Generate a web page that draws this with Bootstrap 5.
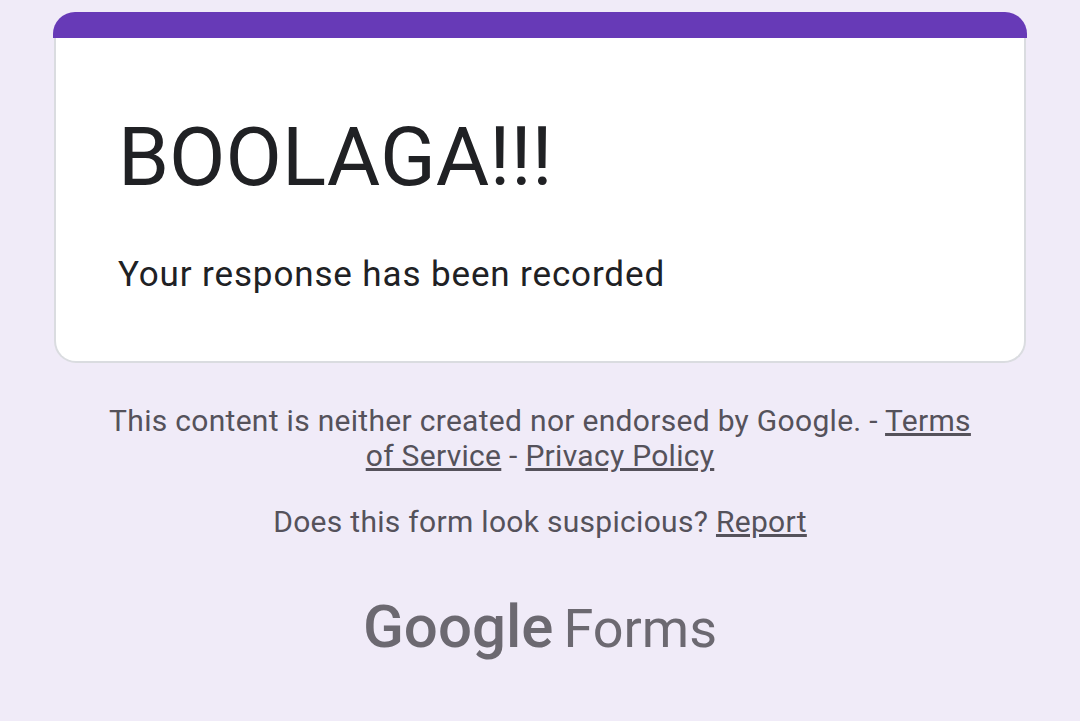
<!DOCTYPE html>
<html lang="en">
<head>
<meta charset="utf-8">
<meta name="viewport" content="width=device-width, initial-scale=1">
<title>BOOLAGA!!!</title>
<link href="https://cdn.jsdelivr.net/npm/bootstrap@5.3.0/dist/css/bootstrap.min.css" rel="stylesheet">
<style>
body { background: #f0ebf8; color: #202124; font-family: Roboto, sans-serif; }
.page { padding: 12px 53px 0; }
.accent { height: 26px; background: #673ab7; border-radius: 22px 22px 0 0; }
.response { margin: 0 1px 40px; border: 2px solid #dadce0; border-top: 0; border-radius: 0 0 22px 22px; padding: 69px 62px 64px; }
.form-title { font-size: 82px; line-height: 100px; margin-bottom: 46px; font-weight: 400; }
.message { font-size: 35px; line-height: 44px; letter-spacing: .025em; }
.notes { color: #55525b; font-size: 30px; line-height: 35px; letter-spacing: .01em; padding: 0 42px; }
.notes p { margin-bottom: 31px; }
.notes a { color: inherit; }
.brand { color: #6c6971; line-height: 72px; gap: 10px; margin-top: 52px; }
.brand:hover { color: #55525b; }
.brand-google { font-size: 60px; font-weight: 500; }
.brand-forms { font-size: 54px; font-weight: 400; }
</style>
</head>
<body>
<main class="page">
<div class="accent"></div>
<section class="card response">
<h1 class="form-title">BOOLAGA!!!</h1>
<p class="message mb-0">Your response has been recorded</p>
</section>
<footer class="text-center">
<div class="notes">
<p>This content is neither created nor endorsed by Google. - <a href="#">Terms of Service</a> - <a href="#">Privacy Policy</a></p>
<p>Does this form look suspicious? <a href="#">Report</a></p>
</div>
<a class="brand d-flex justify-content-center align-items-baseline text-decoration-none" href="#"><span class="brand-google">Google</span><span class="brand-forms">Forms</span></a>
</footer>
</main>
<script src="https://cdn.jsdelivr.net/npm/bootstrap@5.3.0/dist/js/bootstrap.bundle.min.js"></script>
</body>
</html>
